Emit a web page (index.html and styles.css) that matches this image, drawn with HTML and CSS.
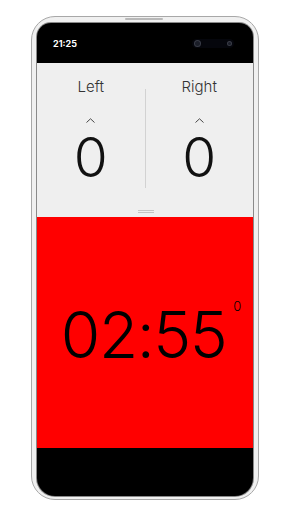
FILE: index.html
```html
<!DOCTYPE html>
<html lang="en">
<head>
  <meta charset="UTF-8" />
  <title>Score Timer</title>
  <link rel="stylesheet" href="styles.css">
</head>
<body>

  <div class="phone">
    <div class="speaker"></div>
    <div class="screen">

      <div class="status-bar">
        <span class="clock">21:25</span>
        <div class="cameras">
          <span class="cam"></span>
          <span class="cam small"></span>
        </div>
      </div>

      <section class="scores">
        <div class="team">
          <p class="team-name">Left</p>
          <svg class="caret" width="9" height="5" viewBox="0 0 9 5">
            <polyline points="0.5,4.5 4.5,0.8 8.5,4.5" fill="none" stroke="#333" stroke-width="0.9"/>
          </svg>
          <p class="score">0</p>
        </div>
        <div class="divider"></div>
        <div class="team">
          <p class="team-name">Right</p>
          <svg class="caret" width="9" height="5" viewBox="0 0 9 5">
            <polyline points="0.5,4.5 4.5,0.8 8.5,4.5" fill="none" stroke="#333" stroke-width="0.9"/>
          </svg>
          <p class="score">0</p>
        </div>
        <div class="handle"></div>
      </section>

      <section class="timer-panel">
        <div class="timer">
          02:55<span class="periods">0</span>
        </div>
      </section>

      <div class="nav-space"></div>
    </div>
  </div>

</body>
</html>
```

FILE: styles.css
```css
body {
  margin: 0;
  padding: 0;
  background: #fff;
  font-family: Inter, Roboto, 'Liberation Sans', sans-serif;
}

.phone {
  position: relative;
  box-sizing: border-box;
  width: 228px;
  height: 484px;
  margin: 16px 0 0 31px;
  padding: 6px 5px 3px 5px;
  border: 1.5px solid #a8a8a8;
  border-radius: 24px;
  background: #f0f0f0;
}

.speaker {
  position: absolute;
  top: 1px;
  left: 93px;
  width: 38px;
  height: 2px;
  border-radius: 2px;
  background: #b8b8b8;
}

.screen {
  display: flex;
  flex-direction: column;
  height: 100%;
  background: #000;
  border-radius: 14px 14px 18px 18px;
  overflow: hidden;
  box-shadow: 0 0 0 1px #8a8a8a;
}

.status-bar {
  display: flex;
  align-items: center;
  justify-content: space-between;
  height: 40px;
  padding: 0 19px 0 16px;
  flex-shrink: 0;
}

.clock {
  color: #fff;
  font-size: 9px;
  font-weight: bold;
  padding-top: 1px;
}

.cameras {
  display: flex;
  align-items: center;
  gap: 28px;
  padding: 2px 3px;
  background: #05060c;
  border-radius: 6px;
}

.cam {
  width: 5px;
  height: 5px;
  border-radius: 50%;
  background: #1b1e28;
  box-shadow: 0 0 0 1px #3a3d48;
}

.cam.small {
  width: 3px;
  height: 3px;
}

.scores {
  position: relative;
  display: grid;
  grid-template-columns: 1fr 1px 1fr;
  height: 154px;
  background: #efefef;
  flex-shrink: 0;
}

.team {
  display: flex;
  flex-direction: column;
  align-items: center;
  padding-top: 15px;
}

.team-name {
  margin: 0;
  font-size: 15px;
  line-height: 18px;
  font-weight: 300;
  color: #333;
}

.caret {
  display: block;
  margin-top: 22px;
}

.score {
  margin: 6px 0 0;
  font-size: 55px;
  line-height: 56px;
  font-weight: 300;
  color: #111;
}

.divider {
  margin-top: 26px;
  height: 99px;
  background: #d2d2d2;
}

.handle {
  position: absolute;
  left: 101px;
  bottom: 4px;
  width: 16px;
  height: 1px;
  border-top: 1px solid #c4c4c4;
  border-bottom: 1px solid #c4c4c4;
}

.timer-panel {
  display: flex;
  align-items: center;
  justify-content: center;
  height: 231px;
  padding-top: 4px;
  box-sizing: border-box;
  background: #ff0000;
  flex-shrink: 0;
}

.timer {
  position: relative;
  margin-right: 3px;
  font-size: 64px;
  line-height: 66px;
  font-weight: 300;
  letter-spacing: -1.5px;
  color: #000;
}

.periods {
  position: absolute;
  top: -2px;
  left: calc(100% + 7px);
  font-size: 13px;
  line-height: 13px;
  letter-spacing: 0;
}

.nav-space {
  flex: 1;
}
```
